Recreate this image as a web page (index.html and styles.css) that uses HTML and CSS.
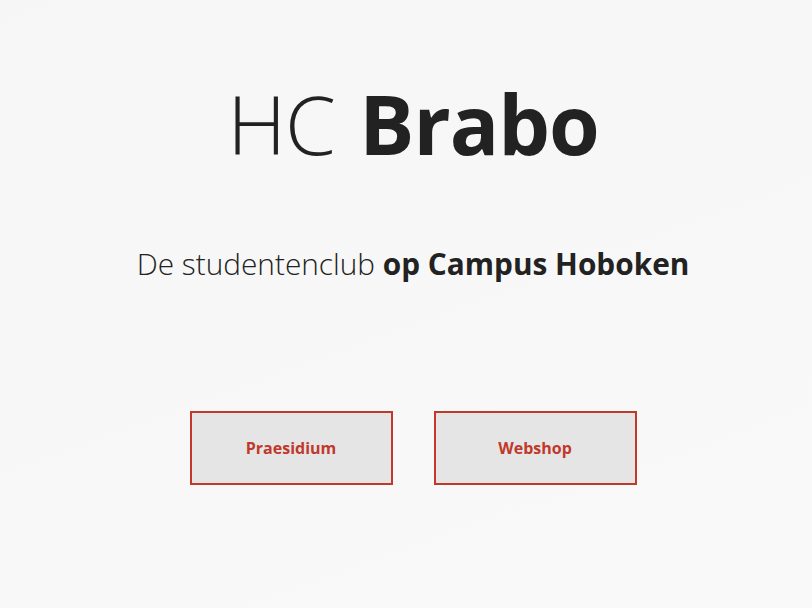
FILE: index.html
```html
<!DOCTYPE html>
<html lang="nl">
<head>
<meta charset="utf-8">
<title>HC Brabo</title>
<link rel="stylesheet" href="styles.css">
</head>
<body>
<main class="hero">
  <h1 class="title"><span class="light">HC</span> <span class="bold">Brabo</span></h1>
  <p class="subtitle">De studentenclub <strong>op Campus Hoboken</strong></p>
  <nav class="actions">
    <a class="btn" href="#">Praesidium</a>
    <a class="btn" href="#">Webshop</a>
  </nav>
</main>
</body>
</html>
```
FILE: styles.css
```css
html, body {
  margin: 0;
  padding: 0;
  height: 100%;
}
body {
  background: linear-gradient(160deg, #f6f6f6 0%, #f9f9f9 100%);
  color: #222;
  font-family: "Open Sans", sans-serif;
}
.hero {
  display: flex;
  flex-direction: column;
  align-items: center;
  padding: 73px 0 0 14px;
}
.title {
  margin: 0;
  font-size: 82px;
  line-height: 100px;
  font-weight: 300;
  letter-spacing: -1px;
  word-spacing: 4px;
}
.title .bold {
  font-weight: 700;
  letter-spacing: -1px;
}
.subtitle {
  margin: 72px 0 0;
  font-size: 29.8px;
  line-height: 38px;
  font-weight: 300;
}
.subtitle strong {
  font-weight: 700;
}
.actions {
  display: flex;
  gap: 41px;
  margin-top: 128px;
}
.btn {
  box-sizing: border-box;
  width: 203px;
  height: 74px;
  display: flex;
  align-items: center;
  justify-content: center;
  border: 2px solid #c0392b;
  background: #e5e5e5;
  color: #c0392b;
  font-weight: 700;
  font-size: 16px;
  text-decoration: none;
}
```
